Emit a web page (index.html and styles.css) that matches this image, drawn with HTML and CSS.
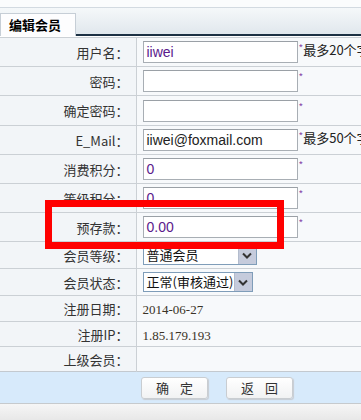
FILE: index.html
```html
<!DOCTYPE html>
<html lang="zh">
<head>
<meta charset="utf-8">
<title>编辑会员</title>
<link rel="stylesheet" href="styles.css">
</head>
<body>
<div class="page">
  <div class="topstrip"></div>
  <div class="tabbar">
    <div class="tab">编辑会员</div>
    <div class="tabline"></div>
  </div>
  <table class="form">
    <tr class="r-in">
      <td class="lbl">用户名：</td>
      <td class="val"><span class="field"><span class="input purple">iiwei</span><span class="star">*</span><span class="hint">最多20个字符</span></span></td>
    </tr>
    <tr class="r-in">
      <td class="lbl">密码：</td>
      <td class="val"><span class="field"><span class="input"></span><span class="star">*</span></span></td>
    </tr>
    <tr class="r-in r-tall">
      <td class="lbl">确定密码：</td>
      <td class="val"><span class="field"><span class="input"></span><span class="star">*</span></span></td>
    </tr>
    <tr class="r-in">
      <td class="lbl">E_Mail：</td>
      <td class="val"><span class="field"><span class="input">iiwei@foxmail.com</span><span class="star">*</span><span class="hint">最多50个字符</span></span></td>
    </tr>
    <tr class="r-in">
      <td class="lbl">消费积分：</td>
      <td class="val"><span class="field"><span class="input purple">0</span><span class="star">*</span></span></td>
    </tr>
    <tr class="r-in">
      <td class="lbl">等级积分：</td>
      <td class="val"><span class="field"><span class="input purple">0</span><span class="star">*</span></span></td>
    </tr>
    <tr class="r-in">
      <td class="lbl">预存款：</td>
      <td class="val"><span class="field"><span class="input purple">0.00</span><span class="star">*</span></span></td>
    </tr>
    <tr class="r-sel">
      <td class="lbl">会员等级：</td>
      <td class="val"><span class="select sel-a"><span class="sel-text">普通会员</span><span class="sel-btn"><svg width="10" height="7" viewBox="0 0 10 7"><path d="M1 1.5 L5 5.5 L9 1.5" fill="none" stroke="#333" stroke-width="2"/></svg></span></span></td>
    </tr>
    <tr class="r-sel">
      <td class="lbl">会员状态：</td>
      <td class="val"><span class="select sel-b"><span class="sel-text">正常(审核通过)</span><span class="sel-btn"><svg width="10" height="7" viewBox="0 0 10 7"><path d="M1 1.5 L5 5.5 L9 1.5" fill="none" stroke="#333" stroke-width="2"/></svg></span></span></td>
    </tr>
    <tr class="r-txt r-date">
      <td class="lbl">注册日期：</td>
      <td class="val"><span class="plain">2014-06-27</span></td>
    </tr>
    <tr class="r-txt">
      <td class="lbl">注册IP：</td>
      <td class="val"><span class="plain">1.85.179.193</span></td>
    </tr>
    <tr class="r-txt">
      <td class="lbl">上级会员：</td>
      <td class="val"></td>
    </tr>
    <tr class="r-foot">
      <td class="foot" colspan="2">
        <div class="btns">
          <span class="btn">确 定</span>
          <span class="btn">返 回</span>
        </div>
      </td>
    </tr>
  </table>
  <div class="bottom"></div>
  <div class="mark"></div>
</div>
</body>
</html>
```
FILE: styles.css
```css
html, body {
  margin: 0;
  padding: 0;
  overflow: hidden;
  background: #ffffff;
}
body {
  font-family: "Noto Sans CJK SC", "Liberation Sans", sans-serif;
  font-size: 13px;
  color: #333;
}
.page {
  position: relative;
  width: 361px;
  height: 420px;
  overflow: hidden;
}
.topstrip {
  height: 7px;
  background: #fbfcfd;
  border-bottom: 1px solid #d3dae1;
}
.tabbar {
  height: 28px;
  display: flex;
  align-items: flex-end;
  background: linear-gradient(#f5f8fa, #dfe6ec);
}
.tab {
  width: 76px;
  height: 23px;
  box-sizing: border-box;
  background: #fdfdfe;
  border: 1px solid #c6ced6;
  border-bottom: none;
  font-weight: bold;
  font-size: 13px;
  color: #000;
  padding-left: 8px;
  line-height: 22px;
}
.tabline {
  flex: 1;
  height: 2px;
  background: #1d3144;
}
.form {
  border-collapse: collapse;
  width: 361px;
  margin-top: 1px;
  table-layout: fixed;
}
.form td {
  border-top: 1px solid #cbd0d5;
  padding: 0;
}
.lbl {
  width: 136px;
  box-sizing: border-box;
  text-align: right;
  padding-right: 7px !important;
  background: #f2f5f8;
  border-right: 1px solid #cbd0d5;
  white-space: nowrap;
}
.val {
  background: #f7f9fb;
  padding-left: 6px !important;
  white-space: nowrap;
}
.r-in td { height: 28px; }
.r-tall td { height: 29px; }
.r-sel td { height: 26px; }
.r-txt td { height: 24px; }
.r-date td { height: 25px; }
.field {
  display: flex;
  align-items: flex-start;
}
.input {
  display: block;
  width: 155px;
  height: 22px;
  box-sizing: border-box;
  border: 1px solid #a8aeb4;
  border-top-color: #9aa0a6;
  background: #fff;
  font-family: "Liberation Sans", "Noto Sans CJK SC", sans-serif;
  font-size: 14px;
  line-height: 20px;
  padding-left: 3px;
  color: #222;
  flex: none;
}
.purple { color: #5b1a8c; }
.star {
  color: #8a4aa8;
  font-size: 10px;
  line-height: 14px;
  margin-left: 1px;
}
.hint {
  font-size: 13px;
  line-height: 18px;
  color: #222;
}
.select {
  display: flex;
  height: 20px;
  box-sizing: border-box;
  border: 1px solid #7f9db9;
  background: #fff;
}
.sel-a { width: 114px; }
.sel-b { width: 110px; }
.sel-text {
  flex: 1;
  font-size: 13px;
  line-height: 18px;
  padding-left: 3px;
  color: #111;
  overflow: hidden;
}
.sel-btn {
  width: 17px;
  display: flex;
  align-items: center;
  justify-content: center;
  background: #c5cbdc;
  border-left: 1px solid #b3bccd;
}
.plain {
  font-family: "Liberation Serif", serif;
  font-size: 13px;
  color: #3a3327;
}
.foot {
  height: 31px;
  background: #d7eafb;
  border-top: 1px solid #c3c9cf !important;
}
.btns {
  display: flex;
  gap: 18px;
  padding-left: 141px;
}
.btn {
  width: 67px;
  height: 22px;
  box-sizing: border-box;
  border: 1px solid #c9cdd1;
  border-radius: 3px;
  background: linear-gradient(#ffffff, #f1f2f3);
  box-shadow: 1px 1px 1px #c8ccd2;
  text-align: center;
  font-size: 13px;
  line-height: 20px;
  color: #333;
  letter-spacing: 4px;
  text-indent: 4px;
}
.bottom {
  height: 18px;
  border-top: 1px solid #c6cacd;
  background: linear-gradient(#f6f6f6, #e6e6e6);
}
.mark {
  position: absolute;
  left: 45px;
  top: 200px;
  width: 239px;
  height: 49px;
  box-sizing: border-box;
  border: 7px solid #ff0000;
}
```
